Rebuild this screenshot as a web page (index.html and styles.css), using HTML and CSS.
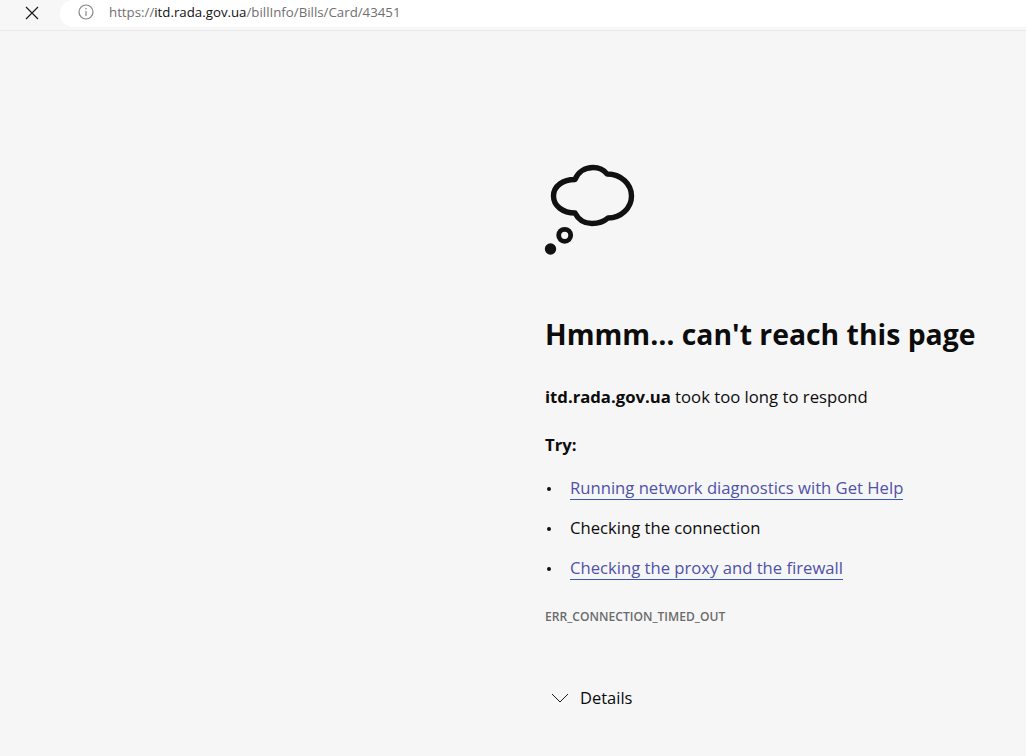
FILE: index.html
```html
<!DOCTYPE html>
<html lang="en">
<head>
<meta charset="utf-8">
<title>Can't reach this page</title>
<link rel="stylesheet" href="styles.css">
</head>
<body>
<header class="toolbar">
  <button class="close" aria-label="Stop">
    <svg width="14" height="14" viewBox="0 0 14 14"><path d="M1 1 L13 13 M13 1 L1 13" fill="none" stroke="#1a1a1a" stroke-width="1.2"/></svg>
  </button>
  <div class="address">
    <svg class="info" width="16" height="16" viewBox="0 0 16 16"><circle cx="8" cy="8" r="7" fill="none" stroke="#858585" stroke-width="1.2"/><path d="M8 7 V12" stroke="#858585" stroke-width="1.2"/><circle cx="8" cy="4.8" r=".8" fill="#858585"/></svg>
    <span class="url">https://<b>itd.rada.gov.ua</b>/billInfo/Bills/Card/43451</span>
  </div>
</header>
<main class="content">
  <svg class="cloud" width="100" height="100" viewBox="0 0 100 100">
    <path d="M30 19.5 C33 12 40 7.5 48 7.5 C54 7.5 59 10 62 14 C76 14 86.5 24 86.5 36 C86.5 48 76 58 63 58 C59 61.5 53 63.5 47 63.5 C39 63.5 33 59 30 53 C18 53 8.5 46 8.5 36 C8.5 26 18 19.5 30 19.5 Z" fill="none" stroke="#111" stroke-width="5.4" stroke-linejoin="round"/>
    <circle cx="19.7" cy="75.3" r="6" fill="none" stroke="#111" stroke-width="4.8"/>
    <circle cx="5.5" cy="89" r="5.7" fill="#111"/>
  </svg>
  <h1 class="title">Hmmm… can't reach this page</h1>
  <p class="message"><b>itd.rada.gov.ua</b> took too long to respond</p>
  <p class="try">Try:</p>
  <ul class="tips">
    <li><a href="#">Running network diagnostics with Get Help</a></li>
    <li>Checking the connection</li>
    <li><a href="#">Checking the proxy and the firewall</a></li>
  </ul>
  <p class="code">ERR_CONNECTION_TIMED_OUT</p>
  <div class="details">
    <svg width="18" height="10" viewBox="0 0 18 10"><path d="M1 1 L9 9 L17 1" fill="none" stroke="#1a1a1a" stroke-width="1"/></svg>
    <span>Details</span>
  </div>
</main>
</body>
</html>
```
FILE: styles.css
```css
* { box-sizing: border-box; }
html, body { margin: 0; height: 100%; overflow: hidden; }
body {
  background: #f6f6f6;
  color: #0c0c0c;
  font-family: "Open Sans", "Noto Sans", sans-serif;
}
.toolbar {
  height: 31px;
  display: flex;
  align-items: flex-start;
  background: #f7f7f7;
  border-bottom: 1px solid #e9e9e9;
}
.close {
  width: 60px;
  height: 25px;
  padding: 0 0 0 4px;
  border: 0;
  background: none;
  display: flex;
  align-items: center;
  justify-content: center;
}
.close svg { display: block; }
.address {
  flex: 1;
  height: 27px;
  background: #fff;
  border-radius: 14px 0 0 14px;
  display: flex;
  align-items: center;
  padding-left: 18px;
  padding-bottom: 3px;
  gap: 15px;
}
.info { display: block; }
.url {
  font-size: 13.27px;
  color: #6f6f6f;
  white-space: nowrap;
}
.url b { font-weight: 400; color: #111; }
.content { padding: 129px 0 0 545px; }
.cloud { display: block; overflow: visible; }
.title {
  margin: 54px 0 0;
  font-size: 28.35px;
  line-height: 40px;
  font-weight: 700;
  white-space: nowrap;
}
.message, .try {
  font-size: 16.7px;
  line-height: 24px;
  white-space: nowrap;
}
.message { margin: 31px 0 0; }
.try { margin: 24px 0 0; font-weight: 700; }
.tips { list-style: none; margin: 19px 0 0; padding: 0; font-size: 16.65px; }
.tips li {
  height: 40px;
  line-height: 24px;
  padding-left: 25px;
  position: relative;
  white-space: nowrap;
}
.tips li::before {
  content: "";
  position: absolute;
  left: 2px;
  top: 11px;
  width: 4px;
  height: 4px;
  border-radius: 50%;
  background: #111;
}
.tips a { color: #4f52a8; text-decoration: none; border-bottom: 1px solid #3a5bb5; display: inline-block; line-height: 23px; }
.code {
  margin: 13px 0 0;
  font-size: 12.1px;
  line-height: 16px;
  font-weight: 600;
  color: #6b6b6b;
}
.details {
  margin-top: 61px;
  padding-left: 6px;
  display: flex;
  align-items: center;
  gap: 11px;
  font-size: 16.5px;
  line-height: 24px;
}
.details svg { display: block; }
```
